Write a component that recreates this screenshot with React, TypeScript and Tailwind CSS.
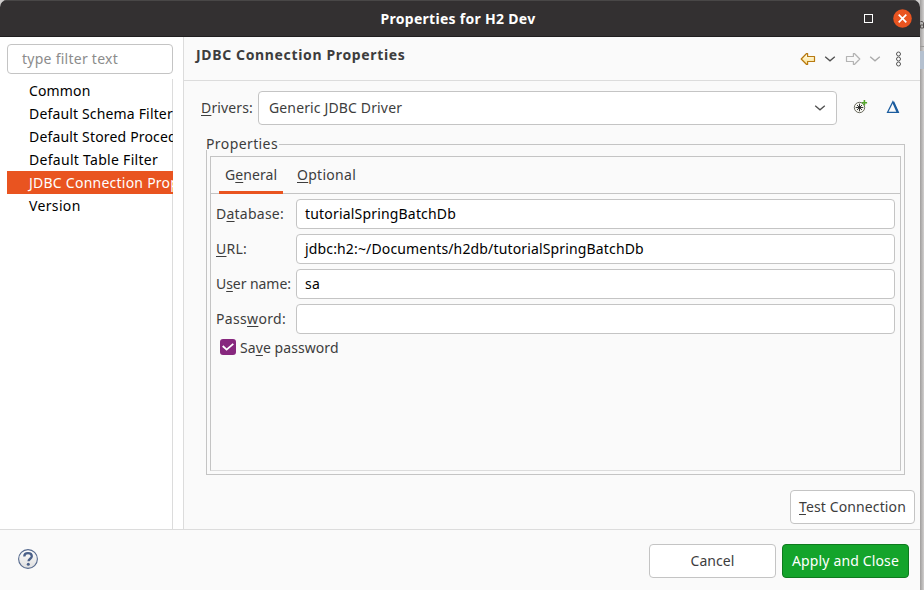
import type { ReactNode } from "react";

function Chevron({ color = "#505050" }: { color?: string }) {
  return (
    <svg width="12" height="8" viewBox="0 0 12 8" fill="none" className="shrink-0">
      <path d="M1.2 1.8 6 5.8l4.8-4" stroke={color} strokeWidth="1.3" />
    </svg>
  );
}

function Arrow({ forward = false }: { forward?: boolean }) {
  return (
    <svg width="16" height="14" viewBox="0 0 16 14" className={forward ? "shrink-0 -scale-x-100" : "shrink-0"}>
      <defs>
        <linearGradient id="arrowFill" x1="0" y1="0" x2="0" y2="1">
          <stop offset="0" stopColor="#fffdf0" />
          <stop offset="1" stopColor="#fbdf8a" />
        </linearGradient>
      </defs>
      <path
        d="M1.2 7 6.6 1.5h1V4.5h6.9v5H7.6v3h-1z"
        fill={forward ? "#f8f8f8" : "url(#arrowFill)"}
        stroke={forward ? "#b4b4b4" : "#b87a10"}
        strokeWidth="1.2"
        strokeLinejoin="round"
      />
    </svg>
  );
}

function Key({ children }: { children: ReactNode }) {
  return <span className="underline decoration-1 underline-offset-2 [text-decoration-skip-ink:none]">{children}</span>;
}

function Field({ label, value, tracking = "" }: { label: ReactNode; value: string; tracking?: string }) {
  return (
    <div className="flex h-[30px] items-center">
      <div className="w-[80px] shrink-0 pb-[2px] whitespace-nowrap">{label}</div>
      <div className={"flex h-[30px] flex-1 items-center rounded-[4px] border border-[#c4c4c4] bg-white pb-[2px] pl-2 text-black " + tracking}>
        {value}
      </div>
    </div>
  );
}

const pages = [
  { name: "Common", style: "tracking-[0.15px]" },
  { name: "Default Schema Filter", style: "tracking-[0.16px]" },
  { name: "Default Stored Procedure Filter", style: "tracking-[0.17px]" },
  { name: "Default Table Filter", style: "tracking-[0.29px]" },
  { name: "JDBC Connection Properties", style: "tracking-[0.24px]", active: true },
  { name: "Version", style: "tracking-[0.35px]" },
];

export default function App() {
  return (
    <div className="flex h-[590px] w-[924px] overflow-hidden bg-[#cfcdcc] font-['Noto_Sans',sans-serif] text-[14px] leading-[19px] text-[#3d3d3d]">
      <div className="flex w-[920px] shrink-0 flex-col overflow-hidden rounded-t-[7px] bg-[#fafafa]">
        <div className="flex h-[37px] shrink-0 items-center border-t border-b border-t-[#494747] border-b-[#201e1f] bg-[#333031] pr-[8px]">
          <div className="flex-1 pl-[52px] text-center font-bold tracking-[0.29px] text-white">Properties for H2 Dev</div>
          <div className="mr-[20px] mb-px size-[9px] border border-white" />
          <svg width="19" height="19" viewBox="0 0 19 19" className="mb-px shrink-0">
            <circle cx="9.5" cy="9.5" r="9.3" fill="#e95420" />
            <path d="m5.700 5.700 7.600 7.600m0-7.600-7.600 7.600" stroke="white" strokeWidth="1.7" />
          </svg>
        </div>

        <div className="flex h-[492px] shrink-0">
          <div className="w-[183px] shrink-0 bg-white pt-[7px] pl-[7px]">
            <div className="flex h-[30px] w-[166px] items-center rounded-[4px] border border-[#c4c4c4] pb-[2px] pl-[14px] tracking-[0.26px] text-[#8c8c8c]">
              type filter text
            </div>
            <div className="mt-[5px] h-[450px] w-[166px] overflow-hidden text-black shadow-[inset_-1px_0_#dcdcdc]">
              {pages.map((p) => (
                <div
                  key={p.name}
                  className={"h-[23px] overflow-hidden pl-[22px] leading-[23px] whitespace-nowrap " + p.style + (p.active ? " bg-[#e95420] text-white" : "")}
                >
                  {p.name}
                </div>
              ))}
            </div>
          </div>

          <div className="flex-1 border-l border-[#dcdcdc]">
            <div className="flex h-[44px] items-start border-b border-[#dcdcdc] pl-3">
              <div className="mt-[8px] flex-1 font-bold tracking-[0.65px]">JDBC Connection Properties</div>
              <div className="mt-[15px] flex h-[14px] items-center">
                <Arrow />
                <span className="w-[8px]" />
                <Chevron />
                <span className="w-[9px]" />
                <Arrow forward />
                <span className="w-[8px]" />
                <Chevron color="#a9a9a9" />
                <svg width="7" height="16" viewBox="0 0 7 16" className="mr-[18px] ml-[14px] shrink-0" fill="none" stroke="#555" strokeWidth="1">
                  <circle cx="3.5" cy="3" r="2" />
                  <circle cx="3.5" cy="8" r="2" />
                  <circle cx="3.5" cy="13" r="2" />
                </svg>
              </div>
            </div>

            <div className="mt-[10px] flex h-[34px] items-center pl-[17px]">
              <div className="w-[57px] pb-[2px] tracking-[0.14px]">
                <Key>D</Key>rivers:
              </div>
              <div className="flex h-[34px] w-[579px] items-center justify-between rounded-[4px] border border-[#c4c4c4] bg-white px-[10px] tracking-[0.14px]">
                <span className="pb-[2px]">Generic JDBC Driver</span>
                <Chevron />
              </div>
              <svg width="16" height="16" viewBox="0 0 16 16" className="mb-[2px] ml-[16px]" fill="none">
                <circle cx="6.5" cy="8.5" r="5.2" fill="#f4f4ee" stroke="#6b6b60" />
                <path d="M6.5 4.7v7.6M2.7 8.5h7.6M4 6l5 5M9 6l-5 5" stroke="#222" strokeWidth="0.9" />
                <path d="M11.4 1v5.4M8.7 3.7h5.4" stroke="#55a82b" strokeWidth="1.6" />
              </svg>
              <svg width="14" height="14" viewBox="0 0 14 14" className="mb-[2px] ml-[17px]" fill="none">
                <path d="M1.600 12.300 6.900 1.700 12.300 12.300z" stroke="#1b5c9e" strokeWidth="1.3" />
                <path d="M7.200 2 11.600 12" stroke="#1b5c9e" strokeWidth="2.2" />
              </svg>
            </div>

            <div className="mt-[9px] ml-[22px] w-[699px]">
              <div className="flex h-[16px]">
                <div className="mr-[1px] w-[72px] tracking-[0.4px]">Properties</div>
                <div className="mt-[10px] flex-1 border-t border-r border-[#c4c4c4]" />
              </div>
              <div className="h-[325px] border-x border-b border-[#c4c4c4] px-[3px] pt-[6px] pb-[3px]">
                <div className="h-[315px] border border-[#c4c4c4] border-b-[#dcdcdc]">
                  <div className="flex h-[37px] border-b border-[#c4c4c4] pl-2">
                    <div className="-mb-px h-[37px] w-[64px] border-b-3 border-[#e95420] pt-[8px] pl-[6px] tracking-[0.06px]">
                      G<Key>e</Key>neral
                    </div>
                    <div className="pt-[8px] pl-[14px] tracking-[0.28px]">
                      <Key>O</Key>ptional
                    </div>
                  </div>
                  <div className="flex flex-col gap-[5px] pt-[5px] pr-[5px] pl-[5px]">
                    <Field label={<span className="tracking-[0.24px]">D<Key>a</Key>tabase:</span>} value="tutorialSpringBatchDb" tracking="tracking-[0.18px]" />
                    <Field label={<span className="tracking-[0.24px]"><Key>U</Key>RL:</span>} value="jdbc:h2:~/Documents/h2db/tutorialSpringBatchDb" tracking="tracking-[0.15px]" />
                    <Field label={<span className="tracking-[-0.06px]">U<Key>s</Key>er name:</span>} value="sa" tracking="tracking-[0.2px]" />
                    <Field label={<span className="tracking-[0.33px]">Pass<Key>w</Key>ord:</span>} value="" />
                    <div className="flex h-[16px] items-center pl-[4px]">
                      <div className="mr-[4px] flex size-4 items-center justify-center rounded-[3px] bg-[#87277e]">
                        <svg width="12" height="12" viewBox="0 0 12 12" fill="none">
                          <path d="M.7 5 4.600 8.600 11.300 2.900" stroke="white" strokeWidth="1.9" />
                        </svg>
                      </div>
                      <div className="tracking-[0.07px]">
                        Sa<Key>v</Key>e password
                      </div>
                    </div>
                  </div>
                </div>
              </div>
            </div>

            <div className="mt-[15px] flex justify-end pr-[5px]">
              <div className="flex h-[34px] w-[125px] items-center justify-center rounded-[4px] border border-[#c4c4c4] bg-white pb-[2px] tracking-[0.12px]">
                <span>
                  <Key>T</Key>est Connection
                </span>
              </div>
            </div>
          </div>
        </div>

        <div className="flex h-[61px] shrink-0 items-start border-t border-[#dcdcdc] pt-[14px] pr-[11px] pl-[17px]">
          <svg width="22" height="22" viewBox="0 0 22 22" className="mt-[4px]">
            <defs>
              <linearGradient id="helpFill" x1="0" y1="0" x2="0" y2="1">
                <stop offset="0" stopColor="#ffffff" />
                <stop offset="1" stopColor="#dedede" />
              </linearGradient>
            </defs>
            <circle cx="11" cy="11" r="9.4" fill="url(#helpFill)" stroke="#566a8e" strokeWidth="1.1" />
            <path d="M7.3 8.4C7.3 6 8.9 5.2 11 5.2s3.8 1.1 3.8 3.1c0 2.4-3.3 2.5-3.3 5" fill="none" stroke="#4a6088" strokeWidth="2.3" />
            <circle cx="11.3" cy="16.3" r="1.5" fill="#4a6088" />
          </svg>
          <div className="flex-1" />
          <div className="mr-[6px] flex h-[34px] w-[127px] items-center justify-center rounded-[4px] border border-[#c4c4c4] bg-white pb-[2px] tracking-[0.07px]">
            Cancel
          </div>
          <div className="flex h-[34px] w-[127px] items-center justify-center rounded-[4px] border border-[#0e7a1e] bg-[#14a42b] pb-[2px] tracking-[0.14px] text-white">
            Apply and Close
          </div>
        </div>
      </div>

      <div className="flex w-[4px] flex-col bg-linear-to-r from-[#a09e9d] to-[#d2d0cf]">
        <svg width="4" height="46" viewBox="0 0 4 46" fill="none">
          <path d="M.5 21.500H2.500L3.500 23v5H.5V25H3.500" stroke="#55504f" />
        </svg>
        <div className="h-px bg-[#9b9998]" />
        <div className="mt-[4px] h-[18px] bg-[#b4c0cf]" />
      </div>
    </div>
  );
}
